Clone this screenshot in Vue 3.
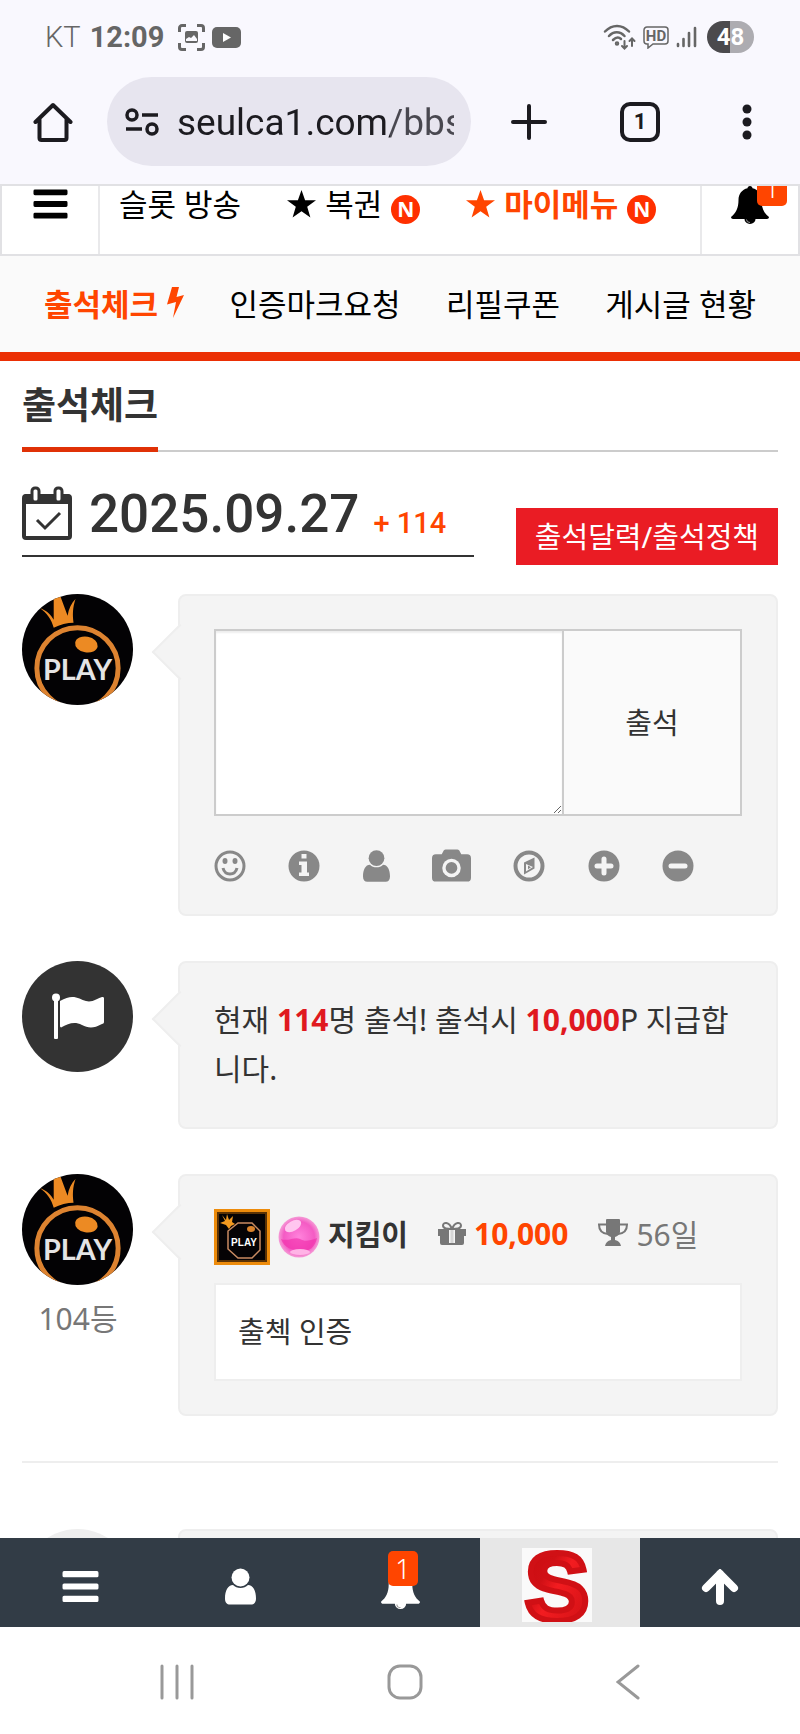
<template>
<div class="phone">
    <svg class="symbols" aria-hidden="true">
        <symbol id="bars" viewBox="0 0 36 30"><path d="M2 0h32a1.500 1.500 0 0 1 1.500 1.500v3a1.500 1.500 0 0 1-1.500 1.500H2a1.500 1.500 0 0 1-1.500-1.500v-3A1.500 1.500 0 0 1 2 0zM2 12h32a1.500 1.500 0 0 1 1.500 1.500v3a1.500 1.500 0 0 1-1.500 1.500H2a1.500 1.500 0 0 1-1.500-1.500v-3A1.500 1.500 0 0 1 2 12zM2 24h32a1.500 1.500 0 0 1 1.500 1.500v3a1.500 1.500 0 0 1-1.500 1.500H2a1.500 1.500 0 0 1-1.500-1.500v-3A1.500 1.500 0 0 1 2 24z" /></symbol>
        <symbol id="bell" viewBox="0 0 38 38"><path d="M19 0c1.500 0 2.500 1 2.500 2.300C27 3.500 30.500 8 30.500 14c0 8 2.500 13 7.500 17 0 1.300-1 2-2 2H24.500a5.500 5 0 0 1-11 0H2c-1 0-2-.7-2-2 5-4 7.500-9 7.500-17C7.500 8 11 3.500 16.500 2.300 16.500 1 17.500 0 19 0z" /><path d="M15.500 33.500a3.500 3 0 0 0 3.500 3" class="clapper" /></symbol>
        <symbol id="user" viewBox="0 0 31 36"><ellipse cx="15.500" cy="9" rx="9" ry="9" /><path d="M8 16.500C3 16.500 0 22 0 30c0 4 2 6 5 6h21c3 0 5-2 5-6 0-8-3-13.500-8-13.500-2 2-4.500 3-7.500 3s-5.500-1-7.500-3z" /></symbol>
        <symbol id="star" viewBox="0 0 29 28"><path d="M14.500 0l3.600 10.200H29l-8.800 6.600L23.400 27.500l-8.900-6.300-8.900 6.300 3.200-10.700L0 10.200h10.900z" /></symbol>
        <symbol id="play" viewBox="0 0 112 112">
            <rect width="112" height="112" fill="#030204" />
            <path d="M18 14c8 3 11 7 14 12L32 3h7l7 19c1-7 4-13 8-17-3 9-3 16-2 24-6 0-14 2-20 5-2-8-7-15-14-20z" fill="#ec8a23" />
            <circle cx="56" cy="75" r="41" fill="none" stroke="#dd8330" stroke-width="5" />
            <ellipse cx="65" cy="51" rx="11.500" ry="8" transform="rotate(10 65 51)" fill="#ec8a23" />
            <text x="56" y="87" class="play-text">PLAY</text>
        </symbol>
    </svg>

    <header class="status">
        <div class="status-side">
            <span class="carrier">KT</span>
            <strong>12:09</strong>
            <svg width="27" height="27" viewBox="0 0 27 27" class="capture">
                <path d="M1.500 8V4a2.500 2.500 0 0 1 2.500-2.500h4M19 1.500h4A2.500 2.500 0 0 1 25.500 4v4M25.500 19v4a2.500 2.500 0 0 1-2.500 2.500h-4M8 25.500H4A2.500 2.500 0 0 1 1.500 23v-4" />
                <rect x="7" y="7" width="13" height="12" rx="2" class="capture-fill" />
                <path d="M8 17v-2l3-2 2 1 3-3 3 4v2z" fill="#f9f8fe" stroke="none" />
            </svg>
            <svg width="29" height="21" viewBox="0 0 29 21"><rect width="29" height="21" rx="5" fill="#666" /><path d="M11 6l8 4.500-8 4.500z" fill="#fff" /></svg>
        </div>
        <div class="status-side">
            <svg width="33" height="26" viewBox="0 0 33 26" fill="none" stroke="#666" stroke-width="2.500" stroke-linecap="round">
                <path d="M2 7.500c7-7.500 17-7.500 24 0M6 12c4.500-5 11-5 15.500 0M10 16c3-3 6-3 8-1" />
                <circle cx="14" cy="19.500" r="1" />
                <path d="M21.500 17v7M19 22l2.500 2.500L24 22M29 22v-7M26.500 17l2.500-2.500 2.500 2.500" stroke-width="2" />
            </svg>
            <svg width="26" height="23" viewBox="0 0 26 23">
                <path d="M4 1h18a3 3 0 0 1 3 3v11a3 3 0 0 1-3 3H10l-5 4v-4H4a3 3 0 0 1-3-3V4a3 3 0 0 1 3-3z" fill="none" stroke="#666" stroke-width="1.500" />
                <text x="13" y="15" class="hd-text">HD</text>
            </svg>
            <svg width="21" height="22" viewBox="0 0 21 22" stroke="#666" stroke-width="2.600" stroke-linecap="round"><path d="M2 18v2M7.500 13v7M13 7v13M19 2v18" /></svg>
            <span class="battery">48</span>
        </div>
    </header>

    <div class="browser">
        <button class="chrome-btn" aria-label="Home">
            <svg width="40" height="42" viewBox="0 0 40 42" fill="none" stroke="#1c1b20" stroke-width="4" stroke-linejoin="round" stroke-linecap="round"><path d="M2.500 21L20 4l17.500 17M6.500 18v19a2 2 0 0 0 2 2h23a2 2 0 0 0 2-2V18" /></svg>
        </button>
        <label class="address">
            <svg width="34" height="28" viewBox="0 0 34 28" fill="none" stroke="#1c1b20" stroke-width="3.500"><circle cx="7" cy="7" r="5" /><path d="M17 7h16M1 21h16" /><circle cx="27" cy="21" r="5" /></svg>
            <input type="text" value="seulca1.com/bbs" aria-label="URL">
        </label>
        <div class="chrome-actions">
            <button class="chrome-btn" aria-label="New tab"><svg width="36" height="36" viewBox="0 0 36 36" stroke="#1c1b20" stroke-width="4" stroke-linecap="round"><path d="M18 2v32M2 18h32" /></svg></button>
            <button class="tabs">1</button>
            <button class="chrome-btn" aria-label="Menu"><svg width="10" height="36" viewBox="0 0 10 36" fill="#1c1b20"><circle cx="5" cy="5" r="4.500" /><circle cx="5" cy="18" r="4.500" /><circle cx="5" cy="31" r="4.500" /></svg></button>
        </div>
    </div>

    <nav class="main-nav">
        <button class="nav-cell" aria-label="메뉴"><svg width="35" height="30"><use href="#bars" /></svg></button>
        <div class="nav-links">
            <a href="#">슬롯 방송</a>
            <a href="#"><svg width="29" height="28"><use href="#star" /></svg>복권<i>N</i></a>
            <a href="#" class="hot"><svg width="29" height="28"><use href="#star" /></svg>마이메뉴<i>N</i></a>
        </div>
        <button class="nav-cell bell-cell" aria-label="알림">
            <svg width="38" height="38"><use href="#bell" /></svg>
            <span class="nav-badge">1</span>
        </button>
    </nav>

    <nav class="sub-nav">
        <a href="#" class="on">출석체크<svg width="17" height="33" viewBox="0 0 17 33"><path d="M5 1h7L9.500 11 17 9 6 32l3-16-9 2.500z" /></svg></a>
        <a v-for="item in subMenu" :key="item" href="#">{{ item }}</a>
    </nav>

    <main class="content">
        <h2><span>출석체크</span></h2>

        <div class="date-row">
            <div class="date">
                <svg width="50" height="54" viewBox="0 0 50 54" fill="none" stroke="#333">
                    <rect x="2" y="10" width="46" height="42" rx="2" stroke-width="4" />
                    <path d="M1 18v-6a4 4 0 0 1 4-4h40a4 4 0 0 1 4 4v6z" fill="#333" stroke="none" />
                    <rect x="10" y="2" width="7" height="14" rx="3" fill="#fff" stroke-width="3" />
                    <rect x="33" y="2" width="7" height="14" rx="3" fill="#fff" stroke-width="3" />
                    <path d="M15 34l8 8 15-15" stroke-width="3" />
                </svg>
                <span class="day">2025.09.27</span>
                <span class="plus">+ 114</span>
            </div>
            <a href="#" class="policy">출석달력/출석정책</a>
        </div>

        <div class="row">
            <div class="side"><svg class="avatar"><use href="#play" /></svg></div>
            <form class="bubble" @submit.prevent>
                <div class="write">
                    <textarea aria-label="출석 내용"></textarea>
                    <button>출석</button>
                </div>
                <div class="tools">
                    <button type="button" aria-label="이모티콘"><svg width="32" height="32" viewBox="0 0 32 32"><circle cx="16" cy="16" r="14" class="line" /><ellipse cx="11" cy="11" rx="2.500" ry="3" /><ellipse cx="21" cy="11" rx="2.500" ry="3" /><path d="M9 18c2 8 12 8 14 0" class="line" /></svg></button>
                    <button type="button" aria-label="정보"><svg width="32" height="32" viewBox="0 0 32 32"><circle cx="16" cy="16" r="15.500" /><path d="M13.500 4h5v4.500h-5zM11 11.500h8v11h2V26H11v-3.500h2.500V15H11z" class="hole" /></svg></button>
                    <button type="button" aria-label="회원"><svg width="27" height="32"><use href="#user" /></svg></button>
                    <button type="button" aria-label="사진"><svg width="39" height="34" viewBox="0 0 40 34"><path d="M4 5h6l2-4q1-1 2-1h12q1 0 2 1l2 4h6a4 4 0 0 1 4 4v20a4 4 0 0 1-4 4H4a4 4 0 0 1-4-4V9a4 4 0 0 1 4-4z" /><circle cx="20" cy="19" r="9.500" class="hole" /><circle cx="20" cy="19" r="6" /></svg></button>
                    <button type="button" aria-label="위치"><svg width="32" height="32" viewBox="0 0 32 32"><circle cx="16" cy="16" r="13.500" class="line thick" /><path d="M21.500 7.500v11L11 24.500v-12z" /><path d="M13 14l7 3-7 4.500z" class="hole" /><path d="M15 15.500l3 1.700-3 2z" /></svg></button>
                    <button type="button" aria-label="늘리기"><svg width="32" height="32" viewBox="0 0 32 32"><circle cx="16" cy="16" r="15.500" /><path d="M16 9v14M9 16h14" class="sign" /></svg></button>
                    <button type="button" aria-label="줄이기"><svg width="32" height="32" viewBox="0 0 32 32"><circle cx="16" cy="16" r="15.500" /><path d="M9 16h14" class="sign" /></svg></button>
                </div>
            </form>
        </div>

        <div class="row">
            <div class="side">
                <div class="avatar flag">
                    <svg width="54" height="48" viewBox="0 0 54 48" fill="#fff"><circle cx="5" cy="4.500" r="4" /><path d="M3 7h4v38a1 1 0 0 1-1 1H4a1 1 0 0 1-1-1zM9 8c13-8 19-2 26 0 6 2 12-3 16-4 1 0 2 0 2 1v24c0 1-1 2-2 2-9 5-14 4-20 1-8-4-14-1-20 2-1 1-2 0-2-1z" /></svg>
                </div>
            </div>
            <p class="bubble notice">현재 <b>114</b>명 출석! 출석시 <b>10,000</b>P 지급합니다.</p>
        </div>

        <div class="row">
            <div class="side">
                <svg class="avatar"><use href="#play" /></svg>
                <span class="rank">104등</span>
            </div>
            <div class="bubble">
                <div class="member">
                    <svg width="56" height="56" viewBox="0 0 56 56">
                        <rect width="56" height="56" fill="#ed8b0b" />
                        <rect x="4" y="4" width="48" height="48" fill="#050305" stroke="#5b3204" stroke-width="2" />
                        <path d="M8 6l4 5 1-6 2 6 4-4-1 6 3 2-4 2-2 3-3-4-6-2 5-2z" fill="#f39a20" />
                        <path d="M24 14h14l8 8v19l-8 8H24l-10-9V22z" fill="none" stroke="#c98b62" stroke-width="1.500" />
                        <ellipse cx="37" cy="20" rx="4" ry="3" fill="#d9822b" />
                        <text x="30" y="37" class="mini-text">PLAY</text>
                    </svg>
                    <svg width="42" height="42" viewBox="0 0 42 42">
                        <defs><radialGradient id="gem"><stop offset="0" stop-color="#ff83dc" /><stop offset=".75" stop-color="#f45bc4" /><stop offset="1" stop-color="#f59bd6" /></radialGradient></defs>
                        <circle cx="21" cy="21" r="20.500" fill="url(#gem)" />
                        <ellipse cx="15" cy="10" rx="9" ry="5" transform="rotate(-30 15 10)" fill="#ffc6ef" />
                        <path d="M3 23c7 3 14-3 19 0s9 2 17-1c-2 9-7 13-14 13C15 35 6 32 3 23z" fill="#f22aa9" opacity=".6" />
                        <ellipse cx="22" cy="36" rx="10" ry="3" fill="#ffb3e6" />
                    </svg>
                    <div class="member-info">
                        <strong class="name">지킴이</strong>
                        <span class="stat">
                            <svg width="28" height="25" viewBox="0 0 28 25"><path d="M0 8h28v7h-2v7a2 2 0 0 1-2 2H4a2 2 0 0 1-2-2v-7H0z" /><path d="M11 9h6v13h-6z" fill="#f4f4f4" /><path d="M12.500 9h3v13h-3z" opacity=".25" /><path d="M14 8C10 8 5 8 5 4.500S11 0 14 8zM14 8c4 0 9 0 9-3.500S17 0 14 8z" fill="none" stroke="#777" stroke-width="2" /></svg>
                            <b>10,000</b>
                        </span>
                        <span class="stat">
                            <svg width="30" height="28" viewBox="0 0 30 28"><path d="M8 1q0-1 1-1h12q1 0 1 1v12q-1 4-5 5v3q5 1 6 6H7q1-5 6-6v-3q-4-1-5-5z" /><path d="M8 5.500H1C1 12 4 14.500 10 15M22 5.500h7c0 6.500-3 9-9 9.500" fill="none" stroke="#777" stroke-width="2" /></svg>
                            56일
                        </span>
                    </div>
                </div>
                <div class="comment">출첵 인증</div>
            </div>
        </div>

        <hr>

        <div class="row next">
            <div class="side"><div class="avatar empty"></div></div>
            <div class="bubble"></div>
        </div>
    </main>

    <nav class="bottom-bar">
        <button aria-label="메뉴"><svg width="37" height="31"><use href="#bars" /></svg></button>
        <button aria-label="내 정보"><svg width="31" height="37"><use href="#user" /></svg></button>
        <button class="alarm" aria-label="알림"><svg width="39" height="39"><use href="#bell" /></svg><span>1</span></button>
        <a href="#" class="home">
            <svg width="70" height="74" viewBox="0 0 70 74">
                <defs><linearGradient id="red" x1="0" y1="0" x2="1" y2="1"><stop offset="0" stop-color="#c90c10" /><stop offset=".35" stop-color="#d01015" /><stop offset=".5" stop-color="#f31c20" /><stop offset="1" stop-color="#c80e12" /></linearGradient></defs>
                <rect width="70" height="74" fill="#fafafa" />
                <text x="35" y="72" class="logo-text">S</text>
            </svg>
        </a>
        <button aria-label="위로"><svg width="38" height="36" viewBox="0 0 38 36"><path d="M19 5v27M5 19L19 5l14 14" fill="none" stroke="#fff" stroke-width="8" stroke-linecap="round" stroke-linejoin="miter" /></svg></button>
    </nav>

    <footer class="system">
        <button aria-label="최근 앱"><svg width="34" height="36" viewBox="0 0 34 36"><path d="M2 2v32M17 2v32M32 2v32" /></svg></button>
        <button aria-label="홈"><svg width="36" height="36" viewBox="0 0 36 36"><rect x="2" y="2" width="32" height="32" rx="11" /></svg></button>
        <button aria-label="뒤로"><svg width="24" height="36" viewBox="0 0 24 36"><path d="M22 2L2 18l20 16" /></svg></button>
    </footer>
</div>
</template>
<script setup>
const subMenu = ['인증마크요청', '리필쿠폰', '게시글 현황']
</script>
<style>
body {
  margin: 0;
}
</style>
<style scoped>
.phone {
  display: flex;
  flex-direction: column;
  height: 100vh;
  overflow: hidden;
  background: #fff;
  color: #333;
  font-family: "Noto Sans", "Noto Sans CJK KR", sans-serif;
  font-size: 29px;
}

.phone * {
  box-sizing: border-box;
}

svg {
  flex: none;
  display: block;
}

button {
  border: 0;
  padding: 0;
  background: none;
  font-family: inherit;
  color: inherit;
}

a {
  color: inherit;
  text-decoration: none;
}

.symbols {
  position: absolute;
  width: 0;
  height: 0;
}

.status {
  flex: none;
  display: flex;
  justify-content: space-between;
  height: 74px;
  padding: 0 46px 0 45px;
  background: #f9f8fe;
  color: #666;
  font-family: Roboto, sans-serif;
}

.status-side {
  display: flex;
  align-items: center;
  gap: 7px;
}

.status-side strong {
  margin: 0 7px 0 2px;
}

.carrier {
  font-weight: 300;
}

.capture {
  fill: none;
  stroke: #666;
  stroke-width: 3;
}

.capture-fill {
  fill: #666;
  stroke: none;
}

.hd-text {
  font: bold 15px Roboto, sans-serif;
  text-anchor: middle;
  fill: #666;
}

.battery {
  width: 47px;
  margin-left: 3px;
  border-radius: 16px;
  background: linear-gradient(to right, #4b4a4d 48%, #adacb1 48%);
  color: #fff;
  font-size: 24px;
  font-weight: bold;
  line-height: 32px;
  text-align: center;
}

.browser {
  flex: none;
  display: flex;
  align-items: center;
  height: 110px;
  padding: 0 48px 15px 33px;
  background: #f9f8fe;
}

.address {
  flex: 1;
  min-width: 0;
  display: flex;
  align-items: center;
  gap: 18px;
  height: 89px;
  margin: 0 40px 0 34px;
  padding: 0 17px 0 18px;
  border-radius: 45px;
  background: #e7e5ef;
}

.address input {
  flex: 1;
  width: 0;
  min-width: 0;
  border: 0;
  padding: 2px 0 0;
  outline: 0;
  background: linear-gradient(to right, #1c1b20 213px, #494850 213px);
  background-clip: text;
  color: transparent;
  font-family: Roboto, sans-serif;
  font-size: 37px;
  line-height: 48px;
}

.chrome-actions {
  flex: none;
  display: flex;
  align-items: center;
  gap: 73px;
}

.chrome-actions .chrome-btn:last-child {
  margin-left: 9px;
}

.tabs {
  width: 40px;
  height: 40px;
  border: 4px solid #1c1b20;
  border-radius: 10px;
  color: #1c1b20;
  font-family: Roboto, sans-serif;
  font-size: 22px;
  font-weight: bold;
}

.main-nav {
  flex: none;
  display: flex;
  height: 72px;
  border: 2px solid #e1e1e4;
  background: #fff;
  color: #000;
  font-size: 31px;
  overflow: hidden;
}

.nav-cell {
  flex: none;
  display: flex;
  justify-content: center;
  width: 98px;
  padding-top: 3px;
  border-right: 2px solid #e9e9eb;
}

.bell-cell {
  position: relative;
  padding-top: 0;
  border-right: 0;
  border-left: 2px solid #e9e9eb;
}

.clapper {
  fill: none;
  stroke: #999;
  stroke-width: 1;
}

.nav-badge {
  position: absolute;
  top: -16px;
  right: 11px;
  width: 30px;
  border-radius: 5px;
  background: #ff4500;
  color: #fff;
  font-size: 26px;
  font-weight: 300;
  line-height: 36px;
}

.nav-links {
  flex: 1;
  display: flex;
  gap: 46px;
  padding-left: 19px;
  line-height: 36px;
  white-space: nowrap;
}

.nav-links a {
  display: flex;
  align-items: center;
  height: 36px;
}

.nav-links svg {
  margin-right: 9px;
}

.nav-links i {
  width: 29px;
  height: 29px;
  margin: 10px 0 0 9px;
  border-radius: 50%;
  background: #ff3000;
  color: #fff;
  font: bold 21px/29px "Noto Sans", sans-serif;
  text-align: center;
}

.nav-links .hot {
  color: #ff4500;
  fill: #ff4500;
  font-weight: bold;
}

.sub-nav {
  flex: none;
  display: flex;
  justify-content: space-between;
  align-items: center;
  height: 105px;
  padding: 0 44px 3px;
  border-bottom: 9px solid #eb2f04;
  background: #fafafa;
  color: #000;
  font-size: 31px;
  white-space: nowrap;
}

.sub-nav .on {
  display: flex;
  align-items: center;
  gap: 9px;
  color: #ff4500;
  fill: #ff4500;
  font-weight: bold;
}

.content {
  flex: 1;
  min-height: 0;
  overflow: hidden;
  padding: 22px 22px 0;
}

h2 {
  display: flex;
  margin: 0;
  border-bottom: 2px solid #ccc;
  font-size: 37px;
  line-height: 44px;
}

h2 span {
  margin-bottom: -2px;
  padding-bottom: 20px;
  border-bottom: 5px solid #e03106;
}

.date-row {
  display: flex;
  justify-content: space-between;
  align-items: flex-end;
  margin: 29px 0;
}

.date {
  flex: 1;
  display: flex;
  align-items: flex-end;
  margin: 0 42px 8px 0;
  padding: 5px 0 15px;
  border-bottom: 2px solid #333;
  font-family: Roboto, sans-serif;
  font-weight: 500;
}

.day {
  margin: 0 14px 0 17px;
  font-size: 53px;
  line-height: 52px;
}

.plus {
  color: #ff4500;
  font-size: 29px;
  line-height: 34px;
}

.policy {
  padding: 0 19px;
  background: #ea1c24;
  color: #fff;
  line-height: 57px;
}

.row {
  display: flex;
  margin-bottom: 45px;
}

.side {
  flex: none;
  width: 112px;
  margin-right: 44px;
  color: #777;
  text-align: center;
}

.avatar {
  width: 111px;
  height: 111px;
  border-radius: 50%;
}

.play-text {
  font: bold 29px Lato, sans-serif;
  text-anchor: middle;
  fill: #e4e4e4;
}

.mini-text {
  font: bold 10px "Liberation Sans", sans-serif;
  text-anchor: middle;
  fill: #fff;
}

.flag {
  display: flex;
  align-items: center;
  justify-content: center;
  background: #333;
}

.empty {
  background: #eee;
}

.rank {
  display: block;
  margin-top: 12px;
  font-size: 30px;
  line-height: 44px;
}

.bubble {
  position: relative;
  flex: 1;
  min-width: 0;
  margin: 0;
  padding: 33px 34px;
  border: 2px solid #eee;
  border-radius: 8px;
  background: #f4f4f4;
}

/* 말풍선 꼬리 */
.bubble::before {
  content: "";
  position: absolute;
  top: 36px;
  left: -20px;
  width: 38px;
  height: 38px;
  border: solid #eee;
  border-width: 0 0 2px 2px;
  background: #f4f4f4;
  transform: rotate(45deg);
}

.write {
  position: relative;
  display: flex;
  height: 187px;
}

.write textarea {
  flex: 1;
  min-width: 0;
  padding: 12px;
  border: 2px solid #ccc;
  border-radius: 0;
  background: #fff;
  box-shadow: inset 0 2px 2px #eee;
  font: inherit;
}

.write button {
  width: 180px;
  margin-left: -2px;
  padding-bottom: 4px;
  border: 2px solid #ccc;
  background: #fafafa;
  font-size: 29px;
}

.tools {
  display: flex;
  align-items: center;
  justify-content: space-between;
  height: 30px;
  margin-top: 35px;
  padding-right: 48px;
  fill: #888;
}

.line {
  fill: none;
  stroke: #888;
  stroke-width: 3;
}

.thick {
  stroke-width: 4;
}

.hole {
  fill: #f4f4f4;
}

.sign {
  stroke: #f4f4f4;
  stroke-width: 5;
  stroke-linecap: round;
}

.notice {
  padding: 32px 34px 34px;
  font-size: 30px;
  line-height: 49px;
}

.notice b {
  color: #e0191f;
}

.member {
  display: flex;
  align-items: center;
  height: 56px;
  margin-bottom: 18px;
  color: #777;
  fill: #777;
}

.member > svg + svg {
  margin: 0 8px;
}

.member-info {
  display: flex;
  align-items: center;
  padding-bottom: 8px;
}

.name {
  color: #333;
}

.stat {
  display: flex;
  align-items: center;
  gap: 8px;
  margin-left: 30px;
  font-size: 30px;
}

.stat b {
  color: #ff4500;
}

.comment {
  padding: 0 22px;
  border: 2px solid #eee;
  background: #fff;
  line-height: 94px;
}

hr {
  height: 2px;
  margin: 0 0 66px;
  border: 0;
  background: #eee;
}

.next .bubble::before {
  display: none;
}

.bottom-bar {
  flex: none;
  display: grid;
  grid-template-columns: repeat(5, 1fr);
  height: 89px;
  background: #323c46;
  fill: #fff;
}

.bottom-bar button,
.home {
  display: flex;
  align-items: center;
  justify-content: center;
  padding-top: 8px;
}

.bottom-bar .home {
  padding: 4px 6px 0 0;
  background: #e7e7e7;
}

.logo-text {
  font: bold 96px "Liberation Sans", sans-serif;
  text-anchor: middle;
  fill: url(#red);
  stroke: #d01015;
  stroke-width: 6;
}

.bottom-bar .alarm {
  position: relative;
  padding-top: 14px;
}

.alarm span {
  position: absolute;
  top: 13px;
  left: 68px;
  width: 30px;
  border-radius: 5px;
  background: #ff4500;
  color: #fff;
  font-size: 27px;
  font-weight: 300;
  line-height: 35px;
}

.system {
  flex: none;
  display: flex;
  align-items: center;
  justify-content: space-between;
  height: 107px;
  padding: 2px 20% 0;
  background: #fff;
}

.system svg {
  fill: none;
  stroke: #999;
  stroke-width: 3;
  stroke-linecap: round;
}
</style>
